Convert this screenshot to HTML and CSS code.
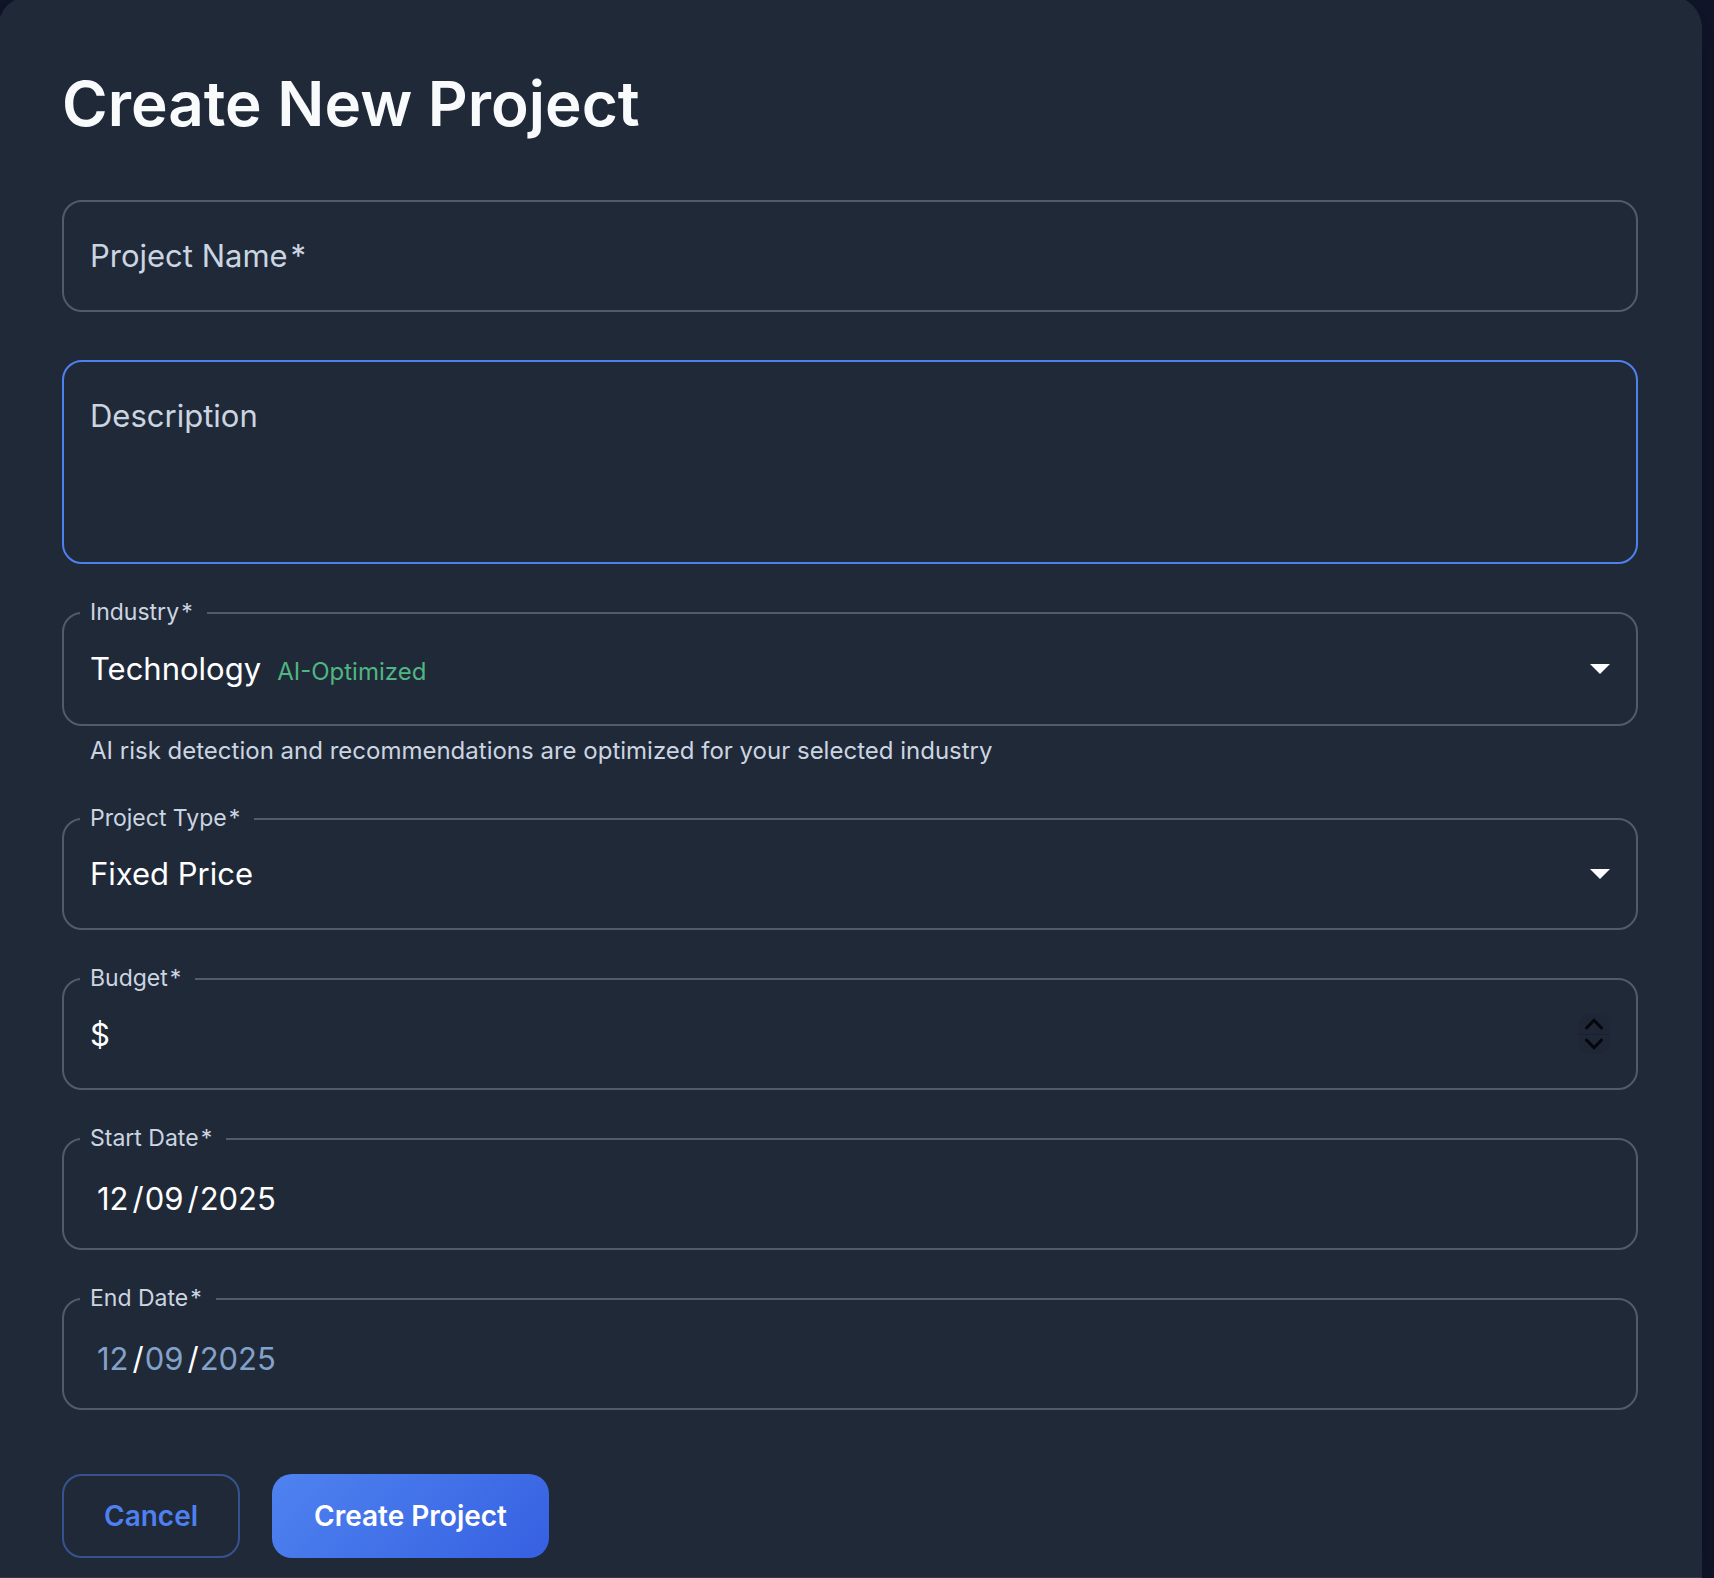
FILE: index.html
```html
<!DOCTYPE html>
<html lang="en">
<head>
<meta charset="utf-8">
<meta name="viewport" content="width=device-width, initial-scale=1">
<title>Create New Project</title>
<link rel="stylesheet" href="styles.css">
</head>
<body>
<main class="card">
    <h1>Create New Project</h1>

    <form class="project-form">
        <div class="field">
            <label class="inner-label" for="projectName">Project Name&hairsp;*</label>
            <input type="text" id="projectName" required>
        </div>

        <div class="field field-area active">
            <label class="inner-label" for="description">Description</label>
            <textarea id="description" rows="3"></textarea>
        </div>

        <div class="field-group">
            <div class="field field-tagged">
                <label class="top-label" for="industry">Industry&hairsp;*</label>
                <select id="industry" required>
                    <option>Technology</option>
                </select>
                <span class="tag">AI-Optimized</span>
                <svg class="arrow" viewBox="0 0 20 10" aria-hidden="true"><path d="M0 0h20L10 10z"/></svg>
            </div>
            <p class="helper">AI risk detection and recommendations are optimized for your selected industry</p>
        </div>

        <div class="field">
            <label class="top-label" for="projectType">Project Type&hairsp;*</label>
            <select id="projectType" required>
                <option>Fixed Price</option>
            </select>
            <svg class="arrow" viewBox="0 0 20 10" aria-hidden="true"><path d="M0 0h20L10 10z"/></svg>
        </div>

        <div class="field">
            <label class="top-label" for="budget">Budget&hairsp;*</label>
            <span class="currency">$</span>
            <input type="number" id="budget" min="0" required>
            <div class="stepper">
                <button type="button" aria-label="Increase" onclick="budget.stepUp()">
                    <svg viewBox="0 0 20 12"><path d="M2.5 10L10 2.2L17.5 10"/></svg>
                </button>
                <button type="button" aria-label="Decrease" onclick="budget.stepDown()">
                    <svg viewBox="0 0 20 12"><path d="M2.5 2L10 9.8L17.5 2"/></svg>
                </button>
            </div>
        </div>

        <div class="field">
            <label class="top-label" for="startDate">Start Date&hairsp;*</label>
            <input type="date" id="startDate" value="2025-12-09" required>
        </div>

        <div class="field">
            <label class="top-label" for="endDate">End Date&hairsp;*</label>
            <input type="date" class="date-muted" id="endDate" value="2025-12-09" required>
        </div>

        <div class="actions">
            <button type="button" class="btn btn-outline">Cancel</button>
            <button type="submit" class="btn btn-primary">Create Project</button>
        </div>
    </form>
</main>
</body>
</html>
```
FILE: styles.css
```css
* {
    box-sizing: border-box;
}

body {
    display: flow-root;
    margin: 0;
    background-color: #10162a;
    color: #ffffff;
    font-family: Inter, "Liberation Sans", sans-serif;
    font-size: 31px;
    overflow-x: hidden;
}

.card {
    margin: -4px 12px 0 -2px;
    padding: 68px 64px 19px;
    background-color: #202938;
    border-bottom: 1px solid #343a4b;
    border-radius: 32px 32px 0 0;
    box-shadow: 0 8px 32px rgba(0, 0, 0, 0.3);
}

h1 {
    margin: 0 0 56px;
    color: #f8fafc;
    font-size: 62px;
    font-weight: 600;
    line-height: 80px;
}

.project-form {
    display: flex;
    flex-direction: column;
    gap: 48px;
}

.field {
    position: relative;
    display: flex;
    align-items: center;
    height: 112px;
    padding: 0 26px;
    border: 2px solid #525b67;
    border-radius: 20px;
}

.field-area {
    height: 204px;
}

.field-tagged {
    height: 114px;
}

.field.active {
    border-color: #4f80f0;
}

.field input, .field textarea, .field select {
    padding: 0;
    border: none;
    outline: none;
    background: transparent;
    color: #ffffff;
    font: inherit;
    line-height: 48px;
    appearance: none;
}

.field input, .field textarea {
    flex: 1;
    min-width: 0;
}

.field textarea {
    height: 144px;
    resize: none;
}

.field select {
    field-sizing: content;
}

/* labels */
.inner-label {
    position: absolute;
    top: 30px;
    left: 26px;
    color: #cbd5e1;
    line-height: 48px;
    pointer-events: none;
}

.top-label {
    position: absolute;
    top: -20px;
    left: 16px;
    padding: 0 14px 0 10px;
    background-color: #202938;
    color: #cbd5e1;
    font-size: 23px;
    line-height: 36px;
}

.helper {
    margin: 6px 28px 0;
    color: #cbd5e1;
    font-size: 24px;
    line-height: 38px;
}

.tag {
    margin-left: 16px;
    padding-top: 4px;
    color: #4fb583;
    font-size: 24px;
}

.arrow {
    width: 20px;
    height: 10px;
    margin-left: auto;
    fill: #ffffff;
    pointer-events: none;
}

/* budget */
.field input::-webkit-inner-spin-button {
    display: none;
}

.stepper {
    display: flex;
    flex-direction: column;
    width: 32px;
    height: 40px;
    border-radius: 12px;
    background-color: #1f2636;
}

.stepper button {
    display: flex;
    flex: 1;
    align-items: center;
    justify-content: center;
    padding: 0;
    border: none;
    background: transparent;
}

.stepper button + button {
    border-top: 1px solid #1b2030;
}

.stepper svg {
    width: 20px;
    height: 12px;
    fill: none;
    stroke: #05070a;
    stroke-width: 3;
    stroke-linecap: round;
    stroke-linejoin: round;
}

/* dates */
.field input[type="date"] {
    padding: 10px 0 0 6px;
}

.field input::-webkit-calendar-picker-indicator {
    display: none;
}

.field input::-webkit-datetime-edit-month-field,
.field input::-webkit-datetime-edit-day-field {
    padding-right: 4px;
}

.date-muted::-webkit-datetime-edit-month-field,
.date-muted::-webkit-datetime-edit-day-field,
.date-muted::-webkit-datetime-edit-year-field {
    color: #83a2ca;
}

/* buttons */
.actions {
    display: flex;
    gap: 32px;
    margin-top: 16px;
}

.btn {
    height: 84px;
    padding: 0 42px;
    border: none;
    border-radius: 20px;
    font-family: inherit;
    font-size: 28px;
    font-weight: 600;
    cursor: pointer;
}

.btn-outline {
    padding: 0 40px;
    border: 2px solid #37538f;
    background: transparent;
    color: #4f80f0;
}

.btn-primary {
    background: linear-gradient(135deg, #4f83f0, #3660e1);
    color: #ffffff;
}
```
